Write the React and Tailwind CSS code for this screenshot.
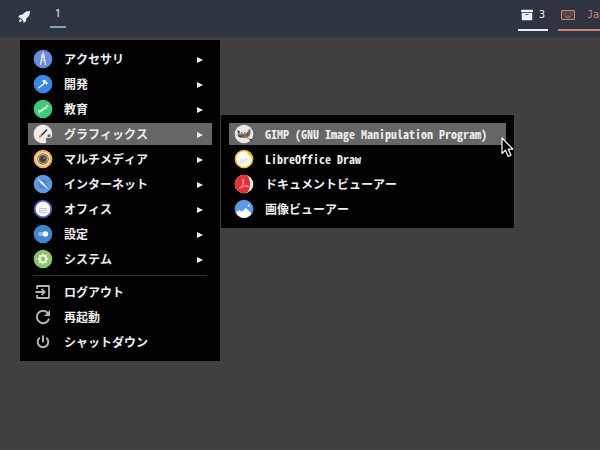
import { FaArchive } from 'react-icons/fa';

function Icon({ children }) {
  return (
    <svg viewBox="0 0 20 20" className="size-5 shrink-0" aria-hidden="true">
      {children}
    </svg>
  );
}

const AccessoriesIcon = () => (
  <Icon>
    <circle cx="10" cy="10" r="9.3" fill="#688cdf" />
    <path d="M10 3.5v2M9 8 7.5 15.5M11 8l1.500 7.500" stroke="#fff" strokeWidth="1.1" strokeLinecap="round" />
    <circle cx="10" cy="7" r="1.9" fill="#fff" />
    <circle cx="10" cy="7" r="0.7" fill="#688cdf" />
    <path d="M7.500 11.300h5" stroke="#dbe4fa" strokeWidth="0.9" />
  </Icon>
);

const DevelopmentIcon = () => (
  <Icon>
    <circle cx="10" cy="10" r="9.3" fill="#3a87e8" />
    <path d="m5.800 13.700 6.200-5" stroke="#fff" strokeWidth="1.4" strokeLinecap="round" />
    <path d="M8.700 6.200q2.300-1 3.800.3l2.500 3-1.300 1.200-1.700-1.700-1 .3-1.200-1.500.3-1z" fill="#fff" />
  </Icon>
);

const EducationIcon = () => (
  <Icon>
    <circle cx="10" cy="10" r="9.3" fill="#42c97a" />
    <path
      d="M5 12c2.500-.7 3.500 1 5-.7s1.800-3.800 4.800-5.300M6 14.500c1-2.300 1.500-3.800 4-4.500s3.500-.3 5-2.500"
      fill="none"
      stroke="#fff"
      strokeWidth="1"
    />
    <path d="m7.300 11.700 1 1.600M10.500 8.500l1.300 1.700M12.300 7l1.200 1.500" stroke="#d8ffe6" strokeWidth="0.8" />
  </Icon>
);

const GraphicsIcon = () => (
  <Icon>
    <path
      d="M10 .7a9.300 9.300 0 1 0 2.300 18.300c1.500-.5 1.200-1.700.7-2.700-.7-1.700.4-2.900 2-2.600 1.700.4 3 .3 3.800-1A9.300 9.300 0 0 0 10 .7z"
      fill="#ececec"
    />
    <circle cx="16" cy="11.800" r="1.500" fill="#5c6366" />
    <path d="m8.300 11.500 5.700-6" stroke="#2d2d2d" strokeWidth="1.5" />
    <path d="M7.300 10.500 9 12.200c-.5 1.300-2 1.800-3.300 1.500.8-.9.300-2.300 1.600-3.200z" fill="#f58a1f" />
  </Icon>
);

const MultimediaIcon = () => (
  <Icon>
    <circle cx="10" cy="10" r="9.3" fill="#fcb04e" />
    <circle cx="10" cy="10" r="7" fill="#f7efe4" />
    <circle cx="10" cy="10" r="5.800" fill="#565656" />
    <circle cx="10" cy="10" r="4.500" fill="none" stroke="#fcaf48" strokeWidth="1.2" />
    <circle cx="10" cy="10" r="2.400" fill="#303b49" />
    <circle cx="11" cy="9" r="0.7" fill="#c9d4df" />
  </Icon>
);

const InternetIcon = () => (
  <Icon>
    <circle cx="10" cy="10" r="9.3" fill="#5b98e3" />
    <circle cx="10" cy="10" r="4.500" fill="#4883cc" />
    <path d="M4.500 4.500 11 9 9 11z" fill="#fff" />
    <path d="M15.500 15.500 9 11 11 9z" fill="#c8d9ed" />
  </Icon>
);

const OfficeIcon = () => (
  <Icon>
    <circle cx="10" cy="10" r="9.3" fill="#3f51b5" />
    <circle cx="10" cy="10" r="7.500" fill="#fafafa" />
    <path d="M6 9.500h8M6 11.500h8M6 13.500h8" stroke="#c4c4c4" strokeWidth="1" />
  </Icon>
);

const SettingsIcon = () => (
  <Icon>
    <circle cx="10" cy="10" r="9.3" fill="#4285cf" />
    <rect x="5" y="8" width="10" height="4" rx="2" fill="#8fbaea" />
    <circle cx="12.500" cy="10" r="2.700" fill="#fff" />
  </Icon>
);

const SystemIcon = () => (
  <Icon>
    <circle cx="10" cy="10" r="9.3" fill="#8bc863" />
    <circle cx="10" cy="10" r="3.200" fill="none" stroke="#fff" strokeWidth="1.6" />
    <path
      d="M10 4.800v1.700M10 13.500v1.700M4.800 10h1.700M13.500 10h1.700M6.300 6.300l1.200 1.200M12.500 12.500l1.200 1.200M6.300 13.700l1.200-1.200M12.500 7.500l1.200-1.200"
      stroke="#fff"
      strokeWidth="1.6"
    />
  </Icon>
);

const LogoutIcon = () => (
  <Icon>
    <path d="M4 7V4.500Q4 4 4.500 4h11q.5 0 .5.500v11q0 .5-.5.500h-11Q4 16 4 15.500V13" fill="none" stroke="#b4b4b4" strokeWidth="1.8" />
    <path d="M2.500 10H11M8.500 6.800 11.700 10 8.500 13.200" fill="none" stroke="#b4b4b4" strokeWidth="1.8" />
  </Icon>
);

const RebootIcon = () => (
  <Icon>
    <path d="M14.800 6A6.200 6.200 0 1 0 16 11.800" fill="none" stroke="#b4b4b4" strokeWidth="2" />
    <path d="M17 3v6h-6z" fill="#b4b4b4" />
  </Icon>
);

const PowerIcon = () => (
  <Icon>
    <path d="M6.800 5.700a5.300 5.300 0 1 0 6.400 0" fill="none" stroke="#b4b4b4" strokeWidth="2" />
    <path d="M10 3.500v6.700" stroke="#b4b4b4" strokeWidth="2" />
  </Icon>
);

const GimpIcon = () => (
  <Icon>
    <circle cx="10" cy="10" r="9.3" fill="#e8e8e8" />
    <path d="M4 8.500c1.500 1.300 3 1 4.500.3l4 .2 3.500-4.500c1 3 .8 6.500-1.500 8.300-2.300 1.500-5.500 1.500-7.500.4-1.700-.8-2.800-2.700-3-4.700z" fill="#7a6350" />
    <path d="M3.300 10q2 2.300 4.700 2.500l-1 1.200Q3.800 13 3.300 10z" fill="#37302b" />
    <path d="M3.800 6.300 6 7.500l-1 2-1.500-1z" fill="#37302b" />
    <circle cx="7.300" cy="8.500" r="1.300" fill="#fff" />
    <circle cx="10.300" cy="8.800" r="1.500" fill="#fff" />
    <circle cx="7.500" cy="8.600" r="0.7" fill="#222" />
    <circle cx="10.500" cy="9" r="0.8" fill="#222" />
    <path d="m11 12.500 5 3" stroke="#c98b46" strokeWidth="1" />
    <path d="m15 14.500 3.200 1-.9 2z" fill="#333" />
  </Icon>
);

const DrawIcon = () => (
  <Icon>
    <circle cx="10" cy="10" r="9.3" fill="#f5c211" />
    <path d="M11.300 2.300A7.800 7.800 0 1 0 17.700 8.700z" fill="#fafafa" />
    <path d="M12 3.600 16.500 8" stroke="#fff3c0" strokeWidth="1" />
    <path d="M8.500 10q-2.300.3-2 2.600a1.600 1.600 0 1 0 1.600-1.700M10.500 11l2.500-1-.5 2.800" fill="none" stroke="#c8c8c8" strokeWidth="0.8" />
  </Icon>
);

const DocumentIcon = () => (
  <Icon>
    <circle cx="10" cy="10" r="9.3" fill="#f2f2f2" />
    <path d="M10 .7a9.300 9.300 0 0 0 0 18.600q3.500 0 4.800-3 2.700-6.300 0-12.600Q13.500.7 10 .7z" fill="#e23237" />
    <path
      d="M5 14.500c2-.7 4.500-4.500 4.600-8.500 0-1.200-1-1-.9.200.3 3 2.300 6 5.300 6.600 1.200.1 1-1-.3-1-2.500-.1-6 .7-8.700 2.700z"
      fill="none"
      stroke="#ffb3b3"
      strokeWidth="0.8"
    />
  </Icon>
);

const ImageIcon = () => (
  <Icon>
    <circle cx="10" cy="10" r="9.3" fill="#5e9be6" />
    <path d="M2 13 5.500 11l2.300 1.700L12 9l5.500 5.500a9.300 9.300 0 0 1-3.500 3.300q-4 1.700-8 0A9 9 0 0 1 2 13z" fill="#fff" />
    <circle cx="14.700" cy="6.500" r="1" fill="#fff" />
  </Icon>
);

const RocketIcon = () => (
  <svg viewBox="0 0 14 14" className="size-3.5" aria-hidden="true">
    <path d="M13 1c-2.800-.1-4.800.7-6.500 2.500L5.700 4.600 2.800 5 1 7.500l2.300.2 3 3 .2 2.300L9 11.200l.4-2.900 1.100-.8C12.300 5.800 13.100 3.800 13 1z" fill="currentColor" />
    <path d="M3 8.700 1.800 12.200 5.300 11z" fill="currentColor" />
  </svg>
);

const KeyboardIcon = () => (
  <svg viewBox="0 0 14 10" className="h-2.5 w-3.5 shrink-0" aria-hidden="true">
    <rect x="0.6" y="0.6" width="12.8" height="8.800" rx="1" fill="none" stroke="currentColor" strokeWidth="1.200" />
    <path d="M2.500 3h9M2.500 5h9" stroke="currentColor" strokeWidth="1" strokeDasharray="1 1" />
    <path d="M4 7h6" stroke="currentColor" strokeWidth="1" />
  </svg>
);

const Arrow = () => (
  <svg viewBox="0 0 6 6" className="mr-1 mt-0.5 ml-auto size-1.5 shrink-0" aria-hidden="true">
    <path d="M0 0 6 3 0 6z" fill="#eee" />
  </svg>
);

const graphicsItems = [
  { label: 'GIMP (GNU Image Manipulation Program)', icon: GimpIcon, active: true },
  { label: 'LibreOffice Draw', icon: DrawIcon },
  { label: 'ドキュメントビューアー', icon: DocumentIcon },
  { label: '画像ビューアー', icon: ImageIcon },
];

const categories = [
  { label: 'アクセサリ', icon: AccessoriesIcon },
  { label: '開発', icon: DevelopmentIcon },
  { label: '教育', icon: EducationIcon },
  { label: 'グラフィックス', icon: GraphicsIcon, active: true, items: graphicsItems },
  { label: 'マルチメディア', icon: MultimediaIcon },
  { label: 'インターネット', icon: InternetIcon },
  { label: 'オフィス', icon: OfficeIcon },
  { label: '設定', icon: SettingsIcon },
  { label: 'システム', icon: SystemIcon },
];

const sessionItems = [
  { label: 'ログアウト', icon: LogoutIcon },
  { label: '再起動', icon: RebootIcon },
  { label: 'シャットダウン', icon: PowerIcon },
];

function MenuItem({ item, hasArrow }) {
  const ItemIcon = item.icon;
  return (
    <button
      type="button"
      role="menuitem"
      className={`flex h-[22px] w-full items-center gap-[11px] px-[5px] text-left whitespace-nowrap ${item.active ? 'bg-[#666]' : ''}`}
    >
      <ItemIcon />
      <span className="text-xs">{item.label}</span>
      {hasArrow && <Arrow />}
    </button>
  );
}

function Pointer() {
  return (
    <svg viewBox="0 0 13 21" className="absolute top-[22px] left-[280px] h-[21px] w-[13px]" aria-hidden="true">
      <path
        d="M1 1v15.500l3.500-3.300 2.700 6.300 2.800-1.200-2.700-6.100h4.700z"
        fill="#000"
        stroke="#fff"
        strokeWidth="1.2"
        strokeLinejoin="round"
      />
    </svg>
  );
}

function Submenu({ items }) {
  return (
    <div className="absolute -top-2 left-full ml-[9px] w-[293px] bg-black p-2">
      <ul role="menu" className="flex flex-col gap-[3px]">
        {items.map((item) => (
          <li key={item.label} role="none">
            <MenuItem item={item} />
          </li>
        ))}
      </ul>
      <Pointer />
    </div>
  );
}

export default function App() {
  return (
    <div className="min-h-screen overflow-hidden bg-[#404040] font-['Noto_Sans_Mono_CJK_JP','Noto_Sans_CJK_JP',monospace] text-[#eee]">
      <header className="flex h-[37px] overflow-hidden bg-[#2e3440] font-['DejaVu_Sans_Mono',monospace] text-[10px] text-[#eceff4]">
        <button type="button" aria-label="Launcher" className="ml-[17px] self-start pt-2.5">
          <RocketIcon />
        </button>
        <button type="button" className="ml-[19px] h-7 w-4 self-start border-b-2 border-[#81a1c1] font-['Noto_Sans',sans-serif] text-[11px]">
          1
        </button>
        <div className="ml-auto flex gap-2.5">
          <button type="button" className="flex h-[31px] w-[30px] items-center justify-center gap-1.5 border-b-2 border-[#eceff4]">
            <FaArchive className="size-3" />
            3
          </button>
          <button type="button" className="flex h-[31px] w-[42px] items-center gap-3 overflow-hidden border-b-2 border-[#d08770] pl-[3px] text-[#d08770]">
            <KeyboardIcon />
            Jap
          </button>
        </div>
      </header>
      <nav className="mt-[3px] ml-5 w-[200px] bg-black p-2 font-bold">
        <ul role="menu" className="flex flex-col gap-[3px]">
          {categories.map((item) => (
            <li key={item.label} role="none" className="relative">
              <MenuItem item={item} hasArrow />
              {item.items && <Submenu items={item.items} />}
            </li>
          ))}
        </ul>
        <hr className="mx-[5px] my-[5px] border-[#333]" />
        <ul role="menu" className="flex flex-col gap-[3px]">
          {sessionItems.map((item) => (
            <li key={item.label} role="none">
              <MenuItem item={item} />
            </li>
          ))}
        </ul>
      </nav>
    </div>
  );
}
